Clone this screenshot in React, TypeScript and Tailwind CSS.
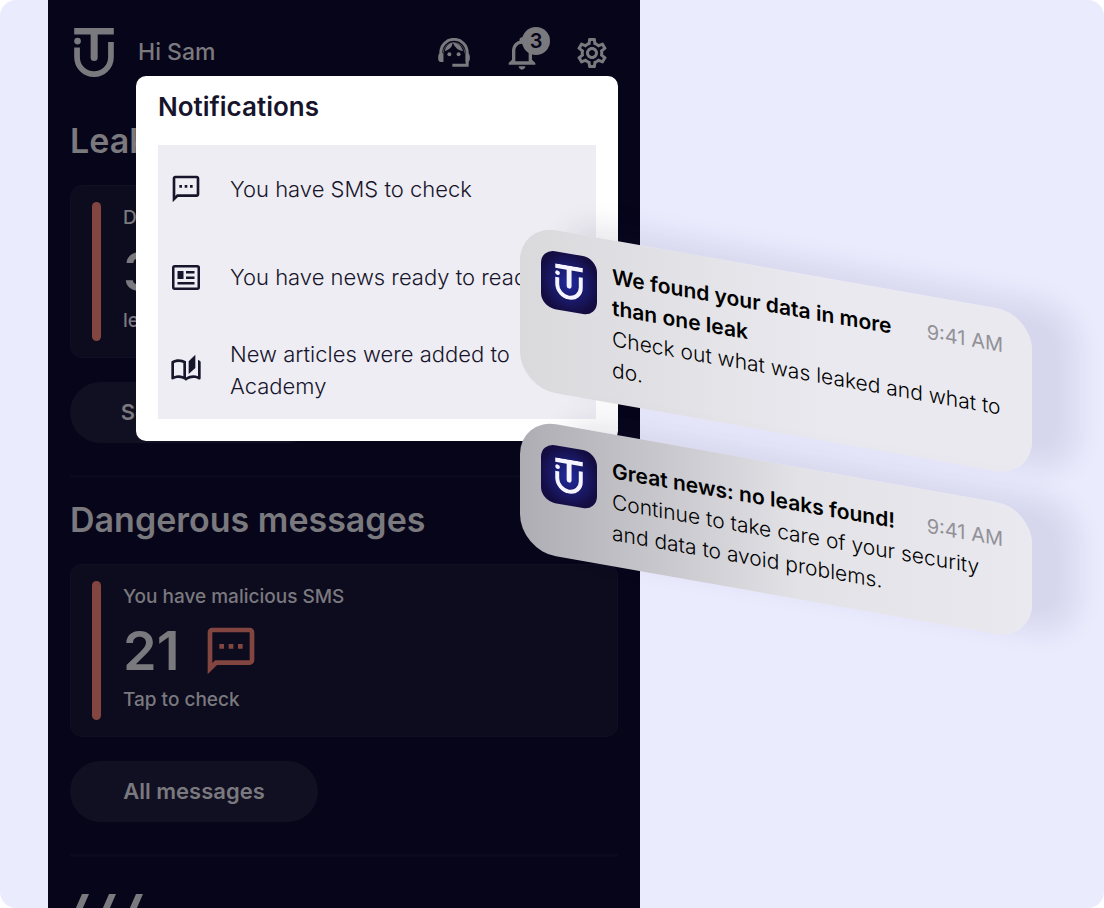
import type { ReactNode } from 'react'
import { MdNotificationsNone, MdOutlineAutoStories, MdOutlineSettings, MdOutlineSms } from 'react-icons/md'

function Logo({ className }: { className: string }) {
  return (
    <svg className={className} viewBox="0 0 118 146" fill="none" aria-hidden="true">
      <path d="M0 0h118v19H70v69a10 10 0 0 1-21 0V19H0z" fill="currentColor" />
      <circle cx="10" cy="39" r="10" fill="currentColor" />
      <path d="M8.5 58v29a50.5 50.5 0 0 0 101 0V42" stroke="currentColor" strokeWidth="17" />
    </svg>
  )
}

function AgentIcon() {
  return (
    <svg className="h-[29px] w-8" viewBox="0 0 96 88" fill="none" aria-hidden="true">
      <path d="M8 52V44a40 40 0 0 1 80 0v39H43" stroke="currentColor" strokeWidth="9" />
      <path d="M15 46a33 32 0 0 1 66 0" stroke="currentColor" strokeWidth="3" opacity=".6" />
      <path d="M5 46h11v27H8q-8-1-8-10v-8q0-6 5-9zM83 46h8q5 3 5 9v8q0 7-5 10h-8z" fill="currentColor" />
      <path d="M20 40q3-20 24-26-2 20-24 26zM44 14q24 1 32 26-22-2-32-26z" fill="currentColor" />
      <circle cx="34" cy="49" r="6" fill="currentColor" />
      <circle cx="62" cy="49" r="6" fill="currentColor" />
    </svg>
  )
}

function NewsIcon() {
  return (
    <svg className="h-[25px] w-7" viewBox="0 0 28 25" fill="none" aria-hidden="true">
      <rect x="1.25" y="1.25" width="25.5" height="22.5" rx="1.5" stroke="currentColor" strokeWidth="2.5" />
      <path d="M5.5 6h6v8h-6zM14 6h8.5v2.5H14zM14 11.5h8.5V14H14zM5.5 17h17v2.5h-17z" fill="currentColor" />
    </svg>
  )
}

function StatCard({ title, value, icon, footer }: { title: string; value: string; icon?: ReactNode; footer: string }) {
  return (
    <div className="flex gap-[22px] rounded-xl border border-[#110f23] bg-[#0d0b1e] px-[21px] py-4">
      <div className="w-[9px] rounded-full bg-[#82453f]"></div>
      <div className="flex h-[139px] flex-col justify-between pt-0.5 pb-1.5 text-[19px] leading-7 font-medium">
        <p>{title}</p>
        <div className="flex items-center gap-6 pt-1">
          <span className="text-[54px] leading-[56px] font-semibold">{value}</span>
          {icon}
        </div>
        <p>{footer}</p>
      </div>
    </div>
  )
}

function Section({ heading, button, children }: { heading: string; button: string; children: ReactNode }) {
  return (
    <section className="border-b-3 border-[#0b091d] pb-8">
      <h2 className="mb-5 text-[34px] leading-[48px] font-semibold">{heading}</h2>
      {children}
      <button className="mt-6 h-[61px] w-[248px] rounded-full bg-[#110f22] text-[22px] font-semibold">{button}</button>
    </section>
  )
}

function NotificationRow({ icon, children }: { icon: ReactNode; children: ReactNode }) {
  return (
    <li className="flex min-h-[88px] items-center gap-7 pl-3 last:min-h-[98px]">
      <span className="flex w-8 shrink-0 justify-center">{icon}</span>
      <p>{children}</p>
    </li>
  )
}

function Toast({ className, title, children }: { className: string; title: ReactNode; children: ReactNode }) {
  return (
    <article className={`flex w-[512px] origin-top-left skew-y-[10deg] gap-[15px] rounded-[36px] px-[21px] pt-[21px] text-black shadow-[44px_-12px_28px_rgba(30,30,80,0.1)] ${className}`}>
      <div className="flex h-[58px] w-14 shrink-0 items-center justify-center rounded-[14px] bg-radial from-[#1f2ba0] to-[#140d42] to-75% text-[#f6f5ff]">
        <Logo className="h-[34px] w-7" />
      </div>
      <div className="grow text-[21px] leading-[31px] whitespace-nowrap">
        <div className="flex justify-between pr-2">
          <h3 className="font-semibold">{title}</h3>
          <time className="text-[20px] text-[#929197]">9:41 AM</time>
        </div>
        <p className="font-light">{children}</p>
      </div>
    </article>
  )
}

function App() {
  return (
    <div className="bg-white font-['Inter',sans-serif]">
      <main className="relative h-screen overflow-hidden rounded-2xl bg-[#ebebfe] pl-12">
        <div className="h-full w-full max-w-[592px] overflow-hidden bg-[#07051a] px-[22px] text-[#7a797e]">
          <header className="flex h-[105px] items-center pr-2 pl-1">
            <Logo className="h-[49px] w-10" />
            <p className="grow pl-6 text-[23px] font-medium">Hi Sam</p>
            <div className="flex items-center gap-8">
              <button aria-label="Support"><AgentIcon /></button>
              <button className="relative" aria-label="Notifications">
                <MdNotificationsNone className="size-10" />
                <span className="absolute -top-1.5 -right-2 flex size-7 items-center justify-center rounded-full bg-[#7a797e] text-[20px] leading-none font-semibold text-[#07051a]">3</span>
              </button>
              <button aria-label="Settings"><MdOutlineSettings className="size-9" /></button>
            </div>
          </header>
          <div className="flex flex-col gap-[18px] pt-3">
            <Section heading="Leaks" button="See all details">
              <StatCard title="Data leaks" value="3" footer="leaks found" />
            </Section>
            <Section heading="Dangerous messages" button="All messages">
              <StatCard title="You have malicious SMS" value="21" footer="Tap to check" icon={<MdOutlineSms className="size-14 text-[#82453f]" />} />
            </Section>
          </div>
          <svg className="mt-[37px] ml-1 h-12 w-[70px]" viewBox="0 0 70 48" fill="currentColor" aria-hidden="true">
            <path d="M8 0h7L-6 48h-7zM35 0h7L21 48h-7zM62 0h7L48 48h-7z" />
          </svg>
        </div>

        <section className="absolute top-[76px] left-[136px] w-[482px] rounded-[10px] bg-white px-[22px] pb-[22px] text-[#17152c]">
          <h2 className="pt-3 pb-5 text-[26px] leading-[37px] font-semibold">Notifications</h2>
          <ul className="bg-[#eeedf3] text-[22px] leading-8 font-light">
            <NotificationRow icon={<MdOutlineSms className="size-[34px]" />}>You have SMS to check</NotificationRow>
            <NotificationRow icon={<NewsIcon />}>You have news ready to read</NotificationRow>
            <NotificationRow icon={<MdOutlineAutoStories className="size-[34px]" />}>
              New articles were added to<br />Academy
            </NotificationRow>
          </ul>
        </section>

        <Toast
          className="absolute top-[224px] left-[520px] h-[163px] bg-linear-to-r from-[#dadadd] to-[#e9e9ef] to-60%"
          title={<>We found your data in more<br />than one leak</>}
        >
          Check out what was leaked and what to<br />do.
        </Toast>
        <Toast
          className="absolute top-[418px] left-[520px] h-[132px] bg-linear-to-r from-[#adadb3] via-[#e2e2e7] via-55% to-[#e9e9ef]"
          title="Great news: no leaks found!"
        >
          Continue to take care of your security<br />and data to avoid problems.
        </Toast>
      </main>
    </div>
  )
}

export default App
